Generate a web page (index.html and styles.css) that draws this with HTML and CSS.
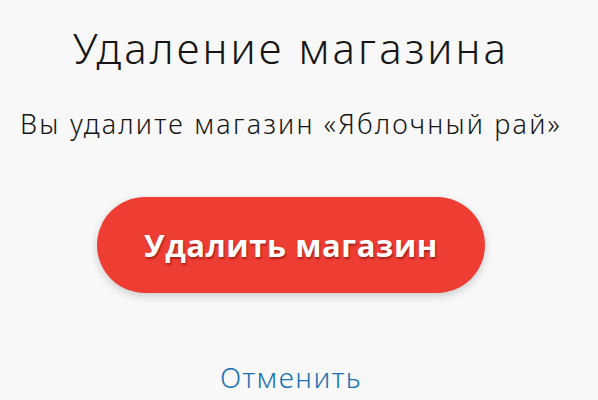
FILE: index.html
```html
<!DOCTYPE html>
<html lang="ru">
<head>
<meta charset="utf-8">
<link rel="stylesheet" href="styles.css">
</head>
<body>
<main class="dialog">
  <h1 class="title">Удаление магазина</h1>
  <p class="message">Вы удалите магазин «Яблочный рай»</p>
  <button class="delete-btn" type="button">Удалить магазин</button>
  <a class="cancel" href="#">Отменить</a>
</main>
</body>
</html>
```

FILE: styles.css
```css
html, body {
  margin: 0;
  padding: 0;
  background: #f8f8f8;
}
.dialog {
  width: 582px;
  height: 400px;
  display: flex;
  flex-direction: column;
  align-items: center;
  font-family: "Noto Sans", "DejaVu Sans", sans-serif;
  color: #151515;
}
.title {
  margin: 20px 0 0;
  font-size: 42px;
  font-weight: 300;
  line-height: 56px;
  letter-spacing: 3.1px;
  white-space: nowrap;
}
.message {
  margin: 30px 0 0;
  font-size: 27px;
  font-weight: 300;
  line-height: 36px;
  letter-spacing: 2.2px;
  white-space: nowrap;
}
.delete-btn {
  margin-top: 55px;
  width: 388px;
  height: 96px;
  border: none;
  border-radius: 48px;
  background: #ee3d33;
  box-shadow: 0 3px 8px rgba(0,0,0,0.18);
  color: #fff;
  font-family: "Open Sans", "DejaVu Sans", sans-serif;
  font-weight: 700;
  font-size: 31px;
  letter-spacing: 0.6px;
  text-shadow: 1px 2px 2px rgba(80,0,0,0.45);
}
.cancel {
  margin-top: 66px;
  font-size: 28px;
  font-weight: 300;
  line-height: 36px;
  letter-spacing: 1.5px;
  color: #1a72b0;
  text-decoration: none;
}
```
